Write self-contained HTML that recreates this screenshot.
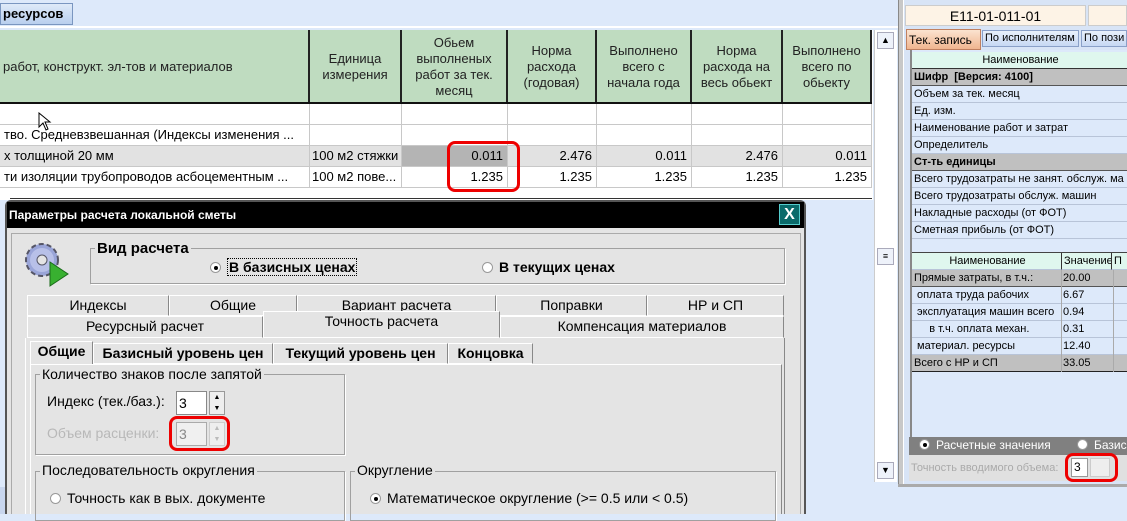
<!DOCTYPE html>
<html><head><meta charset="utf-8"><style>
*{margin:0;padding:0;box-sizing:border-box}
body{width:1127px;height:514px;overflow:hidden;background:#dde9fa;font-family:"Liberation Sans",sans-serif;font-size:12px;color:#000;position:relative}
.a{position:absolute}
.c{position:absolute;border-right:1px solid #c8c8c8;border-bottom:1px solid #c8c8c8;white-space:nowrap;overflow:hidden;padding:0 4px;line-height:20px;font-size:13px}
.h{position:absolute;background:#bfdcc0;border-right:2px solid #222;text-align:center;font-size:13px;line-height:16px;display:flex;align-items:center;justify-content:center;color:#222}
.r{position:absolute;left:912px;width:215px;height:17px;border-bottom:1px solid #b8c4d8;font-size:11px;line-height:16px;padding-left:2px;background:#dde9fa;white-space:nowrap;overflow:hidden}
.g{background:#c0c0c0;font-weight:bold;border-bottom:1px solid #555}
.d{font-family:"Liberation Sans Narrow","Liberation Sans",sans-serif}
.tab{position:absolute;background:#e4e4e4;border:1px solid #fff;border-right:1px solid #888;text-align:center;font-size:14px;line-height:19px}
.box{position:absolute;border:1px solid #a0a0a0;box-shadow:1px 1px 0 #fff}
.leg{position:absolute;background:#e4e4e4;padding:0 2px;font-size:14px}
.rad{display:inline-block;width:11px;height:11px;border-radius:50%;background:#fff;border:1px solid #999;vertical-align:-1px;margin-right:6px;position:relative}
.rad.on:after{content:"";position:absolute;left:3px;top:3px;width:4px;height:4px;border-radius:50%;background:#000}
.red{position:absolute;border:3px solid #e00;border-radius:8px}
</style></head><body>
<!-- top bar -->
<div class="a" style="left:0;top:0;width:900px;height:28px;background:#dde9fa;border-bottom:2px solid #fff"></div>
<div class="a" style="left:0;top:3px;width:73px;height:22px;background:linear-gradient(#dfeaf8,#b9cfee);border:1px solid #7a96c0;font-weight:bold;font-size:13px;line-height:19px;padding-left:2px">ресурсов</div>
<!-- grid -->
<div class="a" style="left:0;top:30px;width:873px;height:170px;background:#fff"></div>
<div class="h" style="left:0;top:30px;width:310px;height:73px;justify-content:flex-start;padding-left:3px">работ, конструкт. эл-тов и материалов</div>
<div class="h" style="left:310px;top:30px;width:92px;height:73px">Единица<br>измерения</div>
<div class="h" style="left:402px;top:30px;width:106px;height:73px">Обьем<br>выполненых<br>работ за тек.<br>месяц</div>
<div class="h" style="left:508px;top:30px;width:89px;height:73px">Норма<br>расхода<br>(годовая)</div>
<div class="h" style="left:597px;top:30px;width:95px;height:73px">Выполнено<br>всего с<br>начала года</div>
<div class="h" style="left:692px;top:30px;width:91px;height:73px">Норма<br>расхода на<br>весь обьект</div>
<div class="h" style="left:783px;top:30px;width:89px;height:73px">Выполнено<br>всего по<br>обьекту</div>
<div class="a" style="left:0;top:102px;width:872px;height:2px;background:#111"></div>
<div class="a" style="left:0;top:146px;width:872px;height:21px;background:#e2e2e2"></div>
<div class="a" style="left:402px;top:146px;width:106px;height:21px;background:#b4b4b4"></div>
<!-- cells -->
<div class="c" style="left:0;top:104px;width:310px;height:21px"></div><div class="c" style="left:310px;top:104px;width:92px;height:21px"></div><div class="c" style="left:402px;top:104px;width:106px;height:21px"></div><div class="c" style="left:508px;top:104px;width:89px;height:21px"></div><div class="c" style="left:597px;top:104px;width:95px;height:21px"></div><div class="c" style="left:692px;top:104px;width:91px;height:21px"></div><div class="c" style="left:783px;top:104px;width:89px;height:21px"></div>
<div class="c" style="left:0;top:125px;width:310px;height:21px">тво. Средневзвешанная (Индексы изменения ...</div><div class="c" style="left:310px;top:125px;width:92px;height:21px"></div><div class="c" style="left:402px;top:125px;width:106px;height:21px"></div><div class="c" style="left:508px;top:125px;width:89px;height:21px"></div><div class="c" style="left:597px;top:125px;width:95px;height:21px"></div><div class="c" style="left:692px;top:125px;width:91px;height:21px"></div><div class="c" style="left:783px;top:125px;width:89px;height:21px"></div>
<div class="c" style="left:0;top:146px;width:310px;height:21px">х толщиной 20 мм</div><div class="c" style="left:310px;top:146px;width:92px;height:21px;padding:0 2px">100 м2 стяжки</div><div class="c" style="left:402px;top:146px;width:106px;height:21px;text-align:right">0.011</div><div class="c" style="left:508px;top:146px;width:89px;height:21px;text-align:right">2.476</div><div class="c" style="left:597px;top:146px;width:95px;height:21px;text-align:right">0.011</div><div class="c" style="left:692px;top:146px;width:91px;height:21px;text-align:right">2.476</div><div class="c" style="left:783px;top:146px;width:89px;height:21px;text-align:right">0.011</div>
<div class="c" style="left:0;top:167px;width:310px;height:21px">ти изоляции трубопроводов асбоцементным ...</div><div class="c" style="left:310px;top:167px;width:92px;height:21px;padding:0 2px">100 м2 пове...</div><div class="c" style="left:402px;top:167px;width:106px;height:21px;text-align:right">1.235</div><div class="c" style="left:508px;top:167px;width:89px;height:21px;text-align:right">1.235</div><div class="c" style="left:597px;top:167px;width:95px;height:21px;text-align:right">1.235</div><div class="c" style="left:692px;top:167px;width:91px;height:21px;text-align:right">1.235</div><div class="c" style="left:783px;top:167px;width:89px;height:21px;text-align:right">1.235</div>
<div class="a" style="left:10px;top:198px;width:862px;height:1px;background:#333"></div>
<div class="red" style="left:447px;top:141px;width:73px;height:51px"></div>
<svg class="a" style="left:38px;top:112px" width="14" height="20"><path d="M1 1 L1 15 L5 11 L8 18 L10 17 L7 10 L12 10 Z" fill="#fff" stroke="#000"/></svg>
<!-- scrollbar -->
<div class="a" style="left:874px;top:30px;width:23px;height:452px;background:#fff;border-left:1px solid #ccc"></div>
<div class="a" style="left:877px;top:32px;width:17px;height:17px;background:#eef2fa;border:1px solid #aab;font-size:9px;text-align:center;line-height:15px">▲</div>
<div class="a" style="left:877px;top:248px;width:17px;height:17px;background:#eef2fa;border:1px solid #aab;font-size:9px;text-align:center;line-height:15px">≡</div>
<div class="a" style="left:877px;top:462px;width:17px;height:17px;background:#eef2fa;border:1px solid #aab;font-size:9px;text-align:center;line-height:15px">▼</div>
<div class="a" style="left:898px;top:0;width:6px;height:487px;background:#c8c8c8;border-left:1px solid #888;border-right:1px solid #fff"></div>
<!-- right panel -->
<div class="a" style="left:904px;top:0;width:223px;height:487px;background:#d8e4f6"></div>
<div class="a" style="left:905px;top:5px;width:181px;height:21px;background:#fdf3e6;border:1px solid #ccc;text-align:center;font-size:14px;line-height:20px">E11-01-011-01</div>
<div class="a" style="left:1088px;top:5px;width:39px;height:21px;background:#fdf3e6;border:1px solid #ccc"></div>
<div class="a" style="left:906px;top:29px;width:75px;height:21px;background:linear-gradient(#fbe3d0,#f0b58f);border:1px solid #c08060;font-size:12px;line-height:20px;padding-left:2px">Тек. запись</div>
<div class="a" style="left:982px;top:30px;width:97px;height:17px;background:linear-gradient(#e8f0fb,#c7d8f3);border:1px solid #8aa0c8;font-size:11px;line-height:15px;padding-left:2px">По исполнителям</div>
<div class="a" style="left:1081px;top:30px;width:46px;height:17px;background:linear-gradient(#e8f0fb,#c7d8f3);border:1px solid #8aa0c8;font-size:11px;line-height:15px;padding-left:2px">По пози</div>
<div class="a" style="left:910px;top:50px;width:217px;height:387px;border-left:2px solid #888;background:#dde9fa"></div>
<div class="r" style="top:52px;background:#dff7ee;text-align:center;border-bottom:1px solid #333">Наименование</div>
<div class="r g" style="top:69px">Шифр&nbsp; [Версия: 4100]</div>
<div class="r" style="top:86px">Объем за тек. месяц</div>
<div class="r" style="top:103px">Ед. изм.</div>
<div class="r" style="top:120px">Наименование работ и затрат</div>
<div class="r" style="top:137px">Определитель</div>
<div class="r g" style="top:154px">Ст-ть единицы</div>
<div class="r" style="top:171px">Всего трудозатраты не занят. обслуж. ма</div>
<div class="r" style="top:188px">Всего трудозатраты обслуж. машин</div>
<div class="r" style="top:205px">Накладные расходы (от ФОТ)</div>
<div class="r" style="top:222px">Сметная прибыль (от ФОТ)</div>
<div class="a" style="left:912px;top:252px;width:215px;height:1px;background:#444"></div>
<div class="r" style="top:253px;width:150px;background:#dff7ee;text-align:center;border-right:1px solid #333">Наименование</div>
<div class="r" style="top:253px;left:1062px;width:50px;background:#dff7ee;border-right:1px solid #333">Значение</div>
<div class="r" style="top:253px;left:1112px;width:15px;background:#dff7ee">П</div>
<div class="r g" style="top:270px;font-weight:normal">Прямые затраты, в т.ч.:<span class="a" style="left:151px">20.00</span></div>
<div class="r" style="top:287px">&nbsp;оплата труда рабочих<span class="a" style="left:151px">6.67</span></div>
<div class="r" style="top:304px">&nbsp;эксплуатация машин всего<span class="a" style="left:151px">0.94</span></div>
<div class="r" style="top:321px">&nbsp;&nbsp;&nbsp;&nbsp; в т.ч. оплата механ.<span class="a" style="left:151px">0.31</span></div>
<div class="r" style="top:338px">&nbsp;материал. ресурсы<span class="a" style="left:151px">12.40</span></div>
<div class="r g" style="top:355px;font-weight:normal;border-bottom:1px solid #222">Всего с НР и СП<span class="a" style="left:151px">33.05</span></div>
<div class="a" style="left:1061px;top:270px;width:1px;height:102px;background:#aaa"></div>
<div class="a" style="left:1113px;top:270px;width:1px;height:102px;background:#aaa"></div>
<div class="a" style="left:909px;top:437px;width:218px;height:18px;background:#808080;color:#fff;font-size:12px;line-height:17px;padding-left:10px"><span class="rad on"></span>Расчетные значения<span class="a" style="left:168px"><span class="rad"></span>Базис</span></div>
<div class="a" style="left:909px;top:455px;width:218px;height:26px;background:#e0e0e0;color:#aaa;font-size:11px;line-height:26px;padding-left:2px">Точность вводимого объема:</div>
<div class="a" style="left:1071px;top:458px;width:17px;height:19px;background:#fff;border:1px solid #999;font-size:12px;padding-left:2px;line-height:17px">3</div>
<div class="a" style="left:1090px;top:458px;width:20px;height:19px;background:#eee;border:1px solid #ccc"></div>
<div class="red" style="left:1065px;top:453px;width:53px;height:29px"></div>
<div class="a" style="left:898px;top:484px;width:229px;height:3px;background:#aaa"></div>
<!-- dialog -->
<div class="a" style="left:5px;top:200px;width:801px;height:314px;background:#e4e4e4;border:2px solid #555;border-bottom:none;border-radius:6px 6px 0 0"></div>
<div class="a" style="left:7px;top:202px;width:797px;height:26px;background:#000;color:#fff;font-size:12px;line-height:26px;padding-left:2px;font-weight:bold;transform-origin:left" >Параметры расчета локальной сметы</div>
<div class="a" style="left:779px;top:204px;width:21px;height:21px;background:#0a6a6a;border:1px solid #5cc;color:#fff;font-size:16px;font-weight:bold;text-align:center;line-height:19px">X</div>
<div class="a" style="left:11px;top:233px;width:790px;height:281px;border:1px solid #aaa;border-bottom:none"></div>
<svg class="a" style="left:22px;top:240px" width="50" height="50" viewBox="0 0 50 50"><circle cx="20" cy="20" r="16" fill="#9aa5d8" stroke="#556" stroke-width="2" stroke-dasharray="5 3"/><circle cx="20" cy="20" r="12" fill="#b8c0e8"/><circle cx="20" cy="20" r="5" fill="#e4e4e4" stroke="#556"/><path d="M28 22 L28 46 L46 34 Z" fill="#38b030" stroke="#1a6a1a"/></svg>
<div class="box" style="left:90px;top:248px;width:695px;height:36px"></div>
<div class="leg d" style="left:95px;top:240px;font-weight:bold;font-size:15px">Вид расчета</div>
<div class="a d" style="left:210px;top:259px;font-size:14px;font-weight:bold"><span class="rad on"></span><span style="border:1px dotted #000;padding:0 1px">В базисных ценах</span></div>
<div class="a d" style="left:482px;top:259px;font-size:14px;font-weight:bold"><span class="rad"></span>В текущих ценах</div>
<div class="tab" style="left:27px;top:295px;width:142px;height:21px">Индексы</div>
<div class="tab" style="left:169px;top:295px;width:128px;height:21px">Общие</div>
<div class="tab" style="left:297px;top:295px;width:199px;height:21px">Вариант расчета</div>
<div class="tab" style="left:496px;top:295px;width:151px;height:21px">Поправки</div>
<div class="tab" style="left:647px;top:295px;width:137px;height:21px">НР и СП</div>
<div class="tab" style="left:27px;top:316px;width:236px;height:22px">Ресурсный расчет</div>
<div class="tab" style="left:263px;top:311px;width:237px;height:27px;border-right:1px solid #888;background:#e4e4e4">Точность расчета</div>
<div class="tab" style="left:500px;top:316px;width:284px;height:22px">Компенсация материалов</div>
<div class="a" style="left:25px;top:338px;width:760px;height:176px;border-left:1px solid #fff;border-right:1px solid #888"></div>
<div class="tab d" style="left:30px;top:341px;width:63px;height:24px;font-weight:bold;font-size:14px;background:#e4e4e4;border-bottom:none">Общие</div>
<div class="tab d" style="left:93px;top:343px;width:180px;height:21px;font-weight:bold;font-size:14px">Базисный уровень цен</div>
<div class="tab d" style="left:273px;top:343px;width:175px;height:21px;font-weight:bold;font-size:14px">Текущий уровень цен</div>
<div class="tab d" style="left:448px;top:343px;width:85px;height:21px;font-weight:bold;font-size:14px">Концовка</div>
<div class="a" style="left:30px;top:364px;width:752px;height:150px;border-left:1px solid #fff;border-top:1px solid #fff;border-right:1px solid #888"></div>
<div class="box" style="left:35px;top:374px;width:310px;height:81px"></div>
<div class="leg d" style="left:40px;top:366px">Количество знаков после запятой</div>
<div class="a d" style="left:47px;top:393px;font-size:14px">Индекс (тек./баз.):</div>
<div class="a" style="left:176px;top:391px;width:31px;height:24px;background:#fff;border:1px solid #888;font-size:14px;line-height:22px;padding-left:2px">3</div>
<div class="a" style="left:209px;top:391px;width:16px;height:24px;background:#eee;border:1px solid #999;font-size:7px;text-align:center;line-height:11px">▲<br>▼</div>
<div class="a d" style="left:47px;top:425px;font-size:14px;color:#b8b8b8">Объем расценки:</div>
<div class="a" style="left:176px;top:422px;width:31px;height:24px;background:#f0f0f0;border:1px solid #aaa;font-size:14px;line-height:22px;padding-left:2px;color:#888">3</div>
<div class="a" style="left:209px;top:422px;width:16px;height:24px;background:#eee;border:1px solid #ccc;font-size:7px;text-align:center;line-height:11px;color:#bbb">▲<br>▼</div>
<div class="red" style="left:169px;top:416px;width:61px;height:35px"></div>
<div class="box" style="left:35px;top:471px;width:310px;height:50px"></div>
<div class="leg d" style="left:40px;top:462px">Последовательность округления</div>
<div class="a d" style="left:50px;top:490px;font-size:14px"><span class="rad"></span>Точность как в вых. документе</div>
<div class="box" style="left:350px;top:471px;width:426px;height:50px"></div>
<div class="leg d" style="left:355px;top:462px">Округление</div>
<div class="a d" style="left:370px;top:490px;font-size:14px"><span class="rad on"></span>Математическое округление (&gt;= 0.5 или &lt; 0.5)</div>
<div class="a" style="left:0;top:487px;width:5px;height:27px;background:#c8d6ee"></div>
</body></html>
